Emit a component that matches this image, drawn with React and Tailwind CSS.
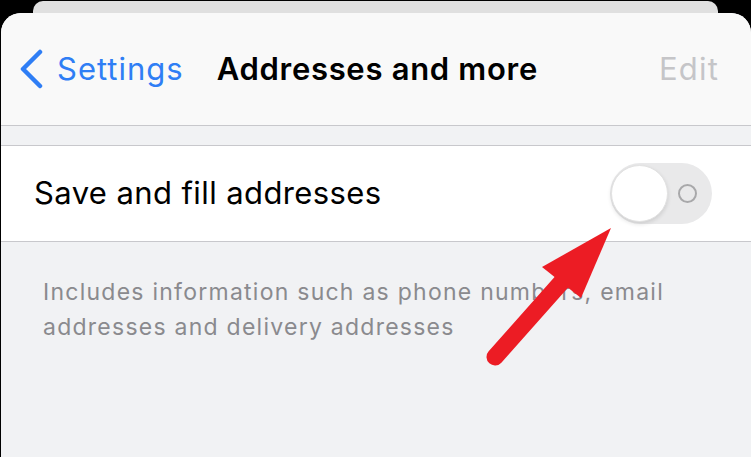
import React from 'react';

export default function App() {
  return (
    <div className="relative w-[751px] h-[457px] overflow-hidden bg-black" style={{ fontFamily: 'Inter, "Liberation Sans", sans-serif' }}>
      {/* sheet behind */}
      <div className="mt-[1px] ml-[33px] w-[685px] h-[12px] rounded-t-[10px] bg-[#e0e0e0]" />

      {/* front sheet */}
      <div className="ml-[1px] w-[750px] h-[444px] rounded-t-[20px] overflow-hidden bg-[#f1f2f4]">
        {/* nav bar */}
        <div className="h-[113px] bg-[#f9f9f9] border-b border-[#c8c8cc] flex items-start pt-[36px]">
          <div className="flex items-center pl-[17px]">
            <svg width="26" height="40" viewBox="0 0 26 40" className="mr-[13px]">
              <path d="M22 3 L5 20 L22 37" fill="none" stroke="#2f7ef5" strokeWidth="4.5" strokeLinecap="round" strokeLinejoin="round" />
            </svg>
            <span className="text-[31px] text-[#2f7ef5] tracking-[1px] leading-[40px]">Settings</span>
          </div>
          <span className="ml-[33px] text-[31px] font-semibold text-black tracking-[0.7px] leading-[40px]">Addresses and more</span>
          <span className="ml-auto mr-[32px] text-[31px] text-[#c5c5c8] tracking-[1.2px] leading-[40px]">Edit</span>
        </div>

        <div className="h-[19px]" />

        {/* toggle row */}
        <div className="h-[97px] bg-white border-y border-[#c8c8cc] flex items-center pl-[33px] pr-[39px]">
          <span className="text-[31px] text-black tracking-[0.4px]">Save and fill addresses</span>
          <div className="ml-auto relative w-[102px] h-[61px] rounded-full bg-[#e9e9ea] flex items-center">
            <div className="absolute left-[1px] top-[2px] w-[57px] h-[57px] rounded-full bg-white border border-[#e2e2e2] shadow-[0_2px_4px_rgba(0,0,0,0.12)]" />
            <div className="absolute left-[68px] top-[21px] w-[19px] h-[19px] rounded-full border-[2px] border-[#a8a8aa]" />
          </div>
        </div>

        {/* footer */}
        <div className="pl-[42px] pr-[10px] pt-[33px] text-[23px] leading-[35px] tracking-[1.25px] text-[#8a8a8e]">
          Includes information such as phone numbers, email<br />addresses and delivery addresses
        </div>
      </div>

      {/* annotation arrow */}
      <svg className="absolute left-0 top-0" width="751" height="457" viewBox="0 0 751 457">
        <line x1="495" y1="357" x2="566" y2="277" stroke="#ec1c24" strokeWidth="17" strokeLinecap="round" />
        <polygon points="611,228 542,267 581,298" fill="#ec1c24" />
      </svg>
    </div>
  );
}
